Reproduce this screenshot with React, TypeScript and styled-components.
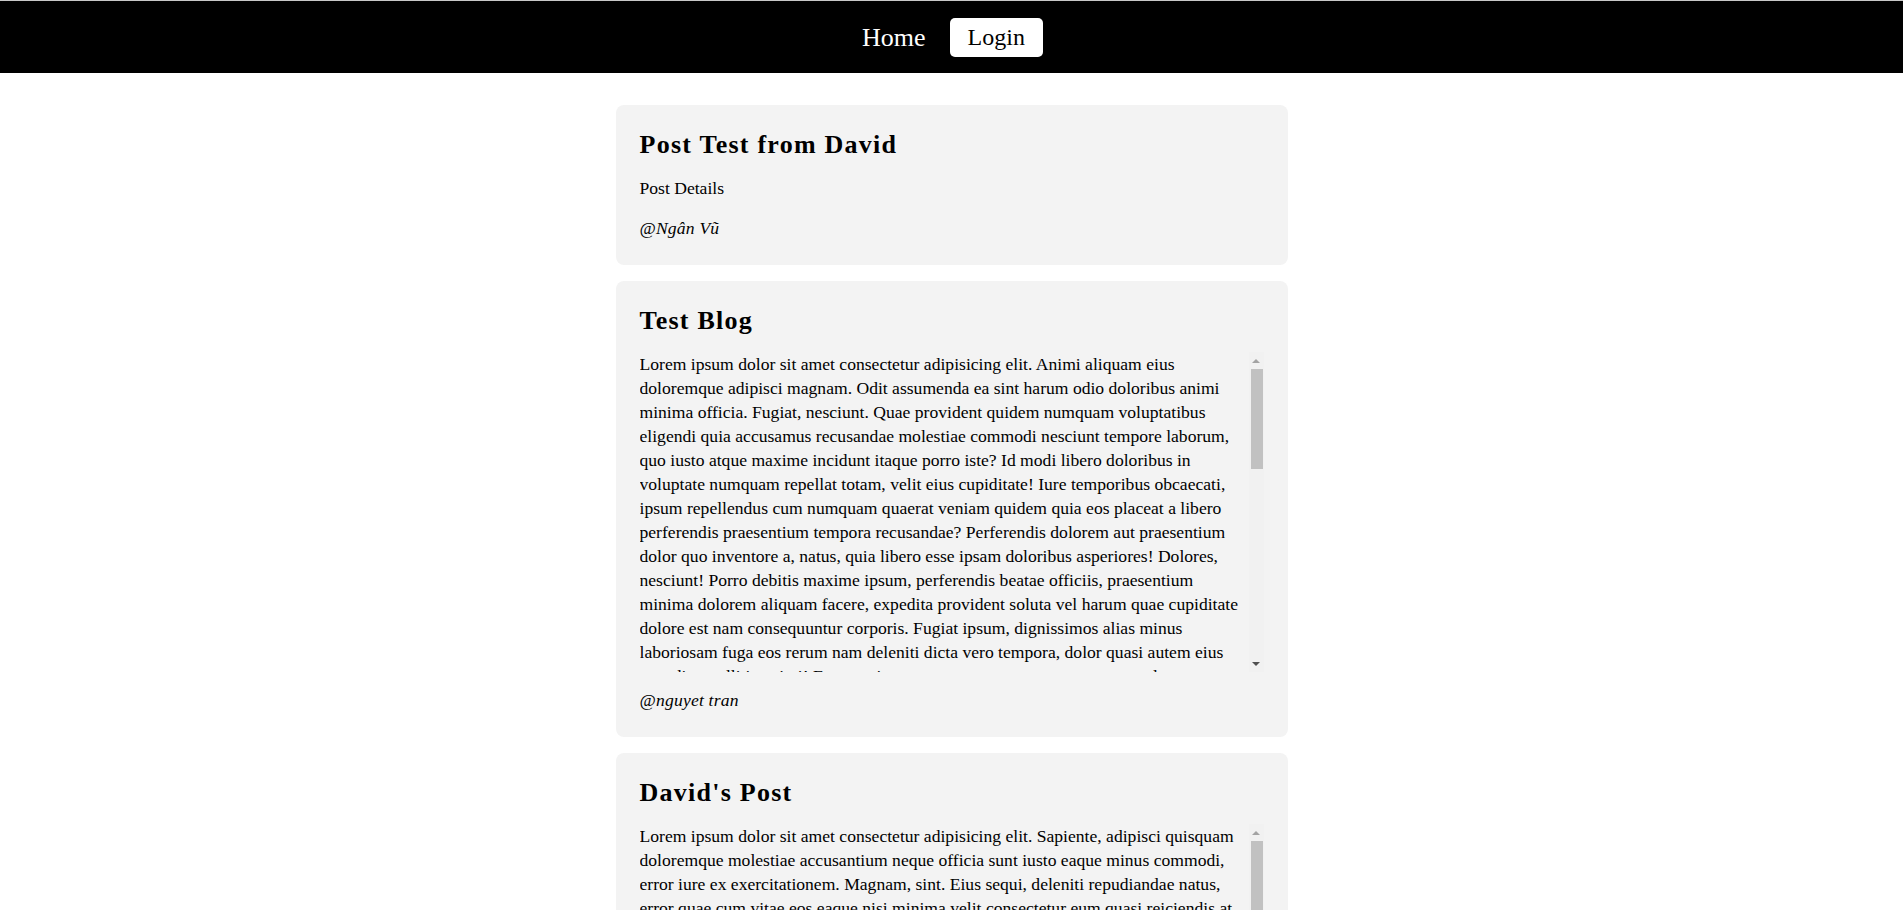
import React, { useLayoutEffect, useRef, useState } from "react";
import styled, { createGlobalStyle } from "styled-components";

const GlobalStyle = createGlobalStyle`
  html, body {
    margin: 0;
    padding: 0;
    background: #ffffff;
    font-family: "Liberation Serif", "Times New Roman", serif;
    color: #000;
  }
  * { box-sizing: border-box; }
`;

const NavBar = styled.nav`
  height: 73px;
  background: #000;
  border-top: 1px solid #c8c8c8;
  display: flex;
  align-items: center;
  justify-content: center;
  gap: 6px;
  padding-right: 16px;
`;

const NavLink = styled.a<{ $active?: boolean }>`
  font-family: "Liberation Serif", "Times New Roman", serif;
  font-size: ${(p) => (p.$active ? "24px" : "26px")};
  line-height: 27px;
  padding: 6px 18px;
  border-radius: 5px;
  text-decoration: none;
  cursor: pointer;
  color: ${(p) => (p.$active ? "#000" : "#fff")};
  background: ${(p) => (p.$active ? "#fff" : "transparent")};
`;

const Main = styled.main`
  width: 672px;
  margin: 32px auto 0;
  display: flex;
  flex-direction: column;
  gap: 16px;
`;

const Card = styled.article`
  background: #f3f3f3;
  border-radius: 8px;
  padding: 24px 24px 25px;
`;

const Title = styled.h2`
  margin: 0 0 15px;
  font-family: "Liberation Serif", "Times New Roman", serif;
  font-weight: 700;
  font-size: 26px;
  letter-spacing: 1.25px;
  line-height: 32px;
`;

const Text = styled.div`
  font-size: 17.6px;
  line-height: 24px;
`;

const ScrollBox = styled.div`
  display: flex;
  height: 320px;
`;

const ScrollText = styled(Text)`
  flex: 1;
  min-width: 0;
  overflow-y: auto;
  scrollbar-width: none;
  &::-webkit-scrollbar {
    display: none;
  }
`;

const ScrollBar = styled.div`
  width: 15px;
  flex: none;
  display: flex;
  flex-direction: column;
  background: #f1f1f1;
`;

const ArrowButton = styled.div<{ $dir: "up" | "down"; $enabled?: boolean }>`
  height: 17px;
  flex: none;
  display: flex;
  align-items: center;
  justify-content: center;
  &::after {
    content: "";
    width: 0;
    height: 0;
    border-left: 4px solid transparent;
    border-right: 4px solid transparent;
    ${(p) =>
      p.$dir === "up"
        ? `border-bottom: 4px solid ${p.$enabled ? "#505050" : "#a3a3a3"};`
        : `border-top: 4px solid ${p.$enabled ? "#505050" : "#a3a3a3"};`}
  }
`;

const Track = styled.div`
  flex: 1;
  position: relative;
`;

const Thumb = styled.div`
  position: absolute;
  left: 2px;
  right: 1px;
  background: #c1c1c1;
`;

const Block = styled.div`
  margin-bottom: 16px;
`;

const Author = styled.div`
  font-style: italic;
  font-size: 17.6px;
  letter-spacing: 0.2px;
  line-height: 24px;
`;

function ScrollArea({ children }: { children: React.ReactNode }) {
  const ref = useRef<HTMLDivElement>(null);
  const [thumb, setThumb] = useState({ top: 0, height: 100, atTop: true, atEnd: false });

  const measure = () => {
    const el = ref.current;
    if (!el) return;
    const track = el.clientHeight - 34;
    const h = Math.max(20, (track * el.clientHeight) / el.scrollHeight);
    const top = (track * el.scrollTop) / el.scrollHeight;
    setThumb({
      top,
      height: h,
      atTop: el.scrollTop <= 0,
      atEnd: el.scrollTop + el.clientHeight >= el.scrollHeight - 1,
    });
  };

  useLayoutEffect(() => {
    measure();
  }, []);

  return (
    <ScrollBox>
      <ScrollText ref={ref} onScroll={measure}>
        {children}
      </ScrollText>
      <ScrollBar>
        <ArrowButton $dir="up" $enabled={!thumb.atTop} />
        <Track>
          <Thumb style={{ top: thumb.top, height: thumb.height }} />
        </Track>
        <ArrowButton $dir="down" $enabled={!thumb.atEnd} />
      </ScrollBar>
    </ScrollBox>
  );
}

const text2 =
  "Lorem ipsum dolor sit amet consectetur adipisicing elit. Animi aliquam eius doloremque adipisci magnam. Odit assumenda ea sint harum odio doloribus animi minima officia. Fugiat, nesciunt. Quae provident quidem numquam voluptatibus eligendi quia accusamus recusandae molestiae commodi nesciunt tempore laborum, quo iusto atque maxime incidunt itaque porro iste? Id modi libero doloribus in voluptate numquam repellat totam, velit eius cupiditate! Iure temporibus obcaecati, ipsum repellendus cum numquam quaerat veniam quidem quia eos placeat a libero perferendis praesentium tempora recusandae? Perferendis dolorem aut praesentium dolor quo inventore a, natus, quia libero esse ipsam doloribus asperiores! Dolores, nesciunt! Porro debitis maxime ipsum, perferendis beatae officiis, praesentium minima dolorem aliquam facere, expedita provident soluta vel harum quae cupiditate dolore est nam consequuntur corporis. Fugiat ipsum, dignissimos alias minus laboriosam fuga eos rerum nam deleniti dicta vero tempora, dolor quasi autem eius expedita mollitia animi! Excepturi, consequuntur tempora neque quae voluptatem quia ut dolores eligendi. Nostrum, quibusdam. Voluptates, minus! Nesciunt, ipsa. Dolorum eveniet sequi facere cumque, officiis ratione laudantium aperiam quas vitae sapiente ipsum nisi rem tempore dolore quos unde neque accusantium. Distinctio aut exercitationem perspiciatis quasi voluptate, fugit saepe quam adipisci laboriosam impedit ullam tenetur excepturi itaque repellendus dolorem, repellat deserunt mollitia magni. Ratione, ipsam! Quidem dolor iure ab aliquid reprehenderit commodi velit, voluptatum similique, eos ad nam quod amet sint est. Architecto quos tempora nobis ducimus veritatis eum nemo, rerum voluptas incidunt saepe vel accusantium tenetur. Ducimus magnam suscipit, omnis ullam nulla iste ipsa laborum inventore delectus, eaque doloremque corrupti, numquam possimus ratione quia atque. Quasi fugiat totam iusto dolorum sunt deleniti pariatur, molestias minima amet beatae vero, natus voluptatibus unde quam nemo vitae dignissimos assumenda facilis. Maiores, neque accusamus? Esse, officia corporis! Blanditiis consequatur fuga harum, reiciendis eius necessitatibus ipsam error voluptatem obcaecati, nihil corrupti deserunt ea quo pariatur sit quaerat laborum? Aspernatur porro in explicabo, sed quaerat culpa reiciendis similique odit magnam dolore odio ipsa perferendis ab hic quisquam. Autem eum voluptate ducimus veniam maxime ex temporibus, omnis quis qui nobis at soluta ipsum delectus nemo tempora earum numquam iusto aliquid illum atque. Ipsa, voluptatibus. Quibusdam recusandae nostrum laboriosam, sapiente tempore adipisci quod vitae eveniet, voluptatem reprehenderit possimus sequi nulla facere numquam consequuntur hic illo fugit alias officiis ut. Praesentium deleniti facilis, eum minima temporibus cumque accusamus, dolorem totam eos perferendis dignissimos nisi quasi non? Error deserunt impedit nobis magni commodi, ea quas ipsum laboriosam odio fugiat omnis aliquam rem vel.";

const text3 =
  "Lorem ipsum dolor sit amet consectetur adipisicing elit. Sapiente, adipisci quisquam doloremque molestiae accusantium neque officia sunt iusto eaque minus commodi, error iure ex exercitationem. Magnam, sint. Eius sequi, deleniti repudiandae natus, error quae cum vitae eos eaque nisi minima velit consectetur eum quasi reiciendis at quibusdam! Voluptatum, rerum. Quos numquam odio deserunt, cum accusamus nisi illum dolorum tempore inventore molestias laborum assumenda sint, vero ipsam fuga minima sequi aspernatur. Commodi, recusandae officiis aliquid provident fugit ad. Pariatur eveniet animi voluptas nam, maxime quae ut, reprehenderit harum dicta quidem iure exercitationem possimus facilis corporis non adipisci optio. Laboriosam facere distinctio expedita quasi esse omnis ipsa ea ratione sed voluptate, tenetur iusto at consequatur. Tempora ullam, dolor laudantium velit fugiat natus recusandae, voluptatem impedit eligendi veritatis ducimus saepe totam! Modi, quas rem excepturi nulla placeat consequuntur cupiditate maiores repellat debitis. Dignissimos aperiam asperiores odit hic nihil quisquam, eum quibusdam ipsa beatae sunt itaque voluptatibus vel aut iste neque minus veniam, laborum atque molestias culpa. Cumque illo numquam eligendi quo fugiat quaerat unde earum soluta, nobis magnam incidunt velit et perspiciatis sapiente! Porro, delectus. Ex esse eius nemo, aliquam similique nesciunt, sit praesentium suscipit dolore iusto blanditiis provident laudantium placeat vitae accusantium. Explicabo quod ab rerum dolores sequi necessitatibus cum ut deleniti est, doloribus voluptates architecto, tempore adipisci consequuntur sint alias quae ratione. Officiis ullam voluptas ipsa fuga repellendus illum perferendis, illo similique minima error.";

type Post = { title: string; body: string; author: string; scroll?: boolean };

const posts: Post[] = [
  { title: "Post Test from David", body: "Post Details", author: "@Ngân Vũ" },
  { title: "Test Blog", body: text2, author: "@nguyet tran", scroll: true },
  { title: "David's Post", body: text3, author: "@David", scroll: true },
];

export default function App() {
  return (
    <>
      <GlobalStyle />
      <NavBar>
        <NavLink>Home</NavLink>
        <NavLink $active>Login</NavLink>
      </NavBar>
      <Main>
        {posts.map((p) => (
          <Card key={p.title}>
            <Title>{p.title}</Title>
            <Block>
              {p.scroll ? <ScrollArea>{p.body}</ScrollArea> : <Text>{p.body}</Text>}
            </Block>
            <Author>{p.author}</Author>
          </Card>
        ))}
      </Main>
    </>
  );
}
